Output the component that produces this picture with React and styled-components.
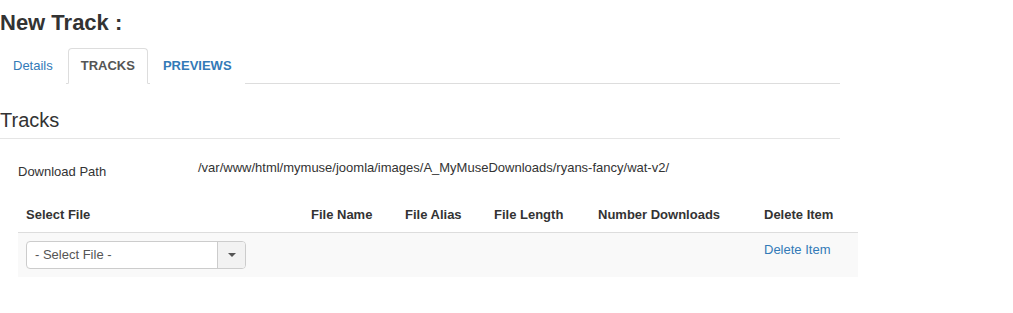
import React from 'react';
import styled, { createGlobalStyle } from 'styled-components';

const GlobalStyle = createGlobalStyle`
  body {
    margin: 0;
    background: #fff;
    font-family: "Liberation Sans", Arial, sans-serif;
    font-size: 13px;
    line-height: 18px;
    color: #333;
  }
`;

const Page = styled.div`
  width: 840px;
  padding-top: 10px;
`;

const Title = styled.h1`
  margin: 0 0 12px;
  font-size: 22px;
  line-height: 26px;
  font-weight: bold;
  color: #333;
`;

const TabBar = styled.ul`
  display: flex;
  margin: 0;
  padding: 0;
  list-style: none;
  border-bottom: 1px solid #ddd;
`;

const Tab = styled.li`
  margin: 0 2px -1px 0;
  padding: 8px 12px;
  border: 1px solid ${p => (p.active ? '#ddd' : 'transparent')};
  border-bottom-color: ${p => (p.active ? '#fff' : 'transparent')};
  border-radius: 4px 4px 0 0;
  background: #fff;
  color: ${p => (p.active ? '#555' : '#337ab7')};
  font-weight: ${p => (p.bold ? 'bold' : 'normal')};
  cursor: pointer;
`;

const SectionTitle = styled.h2`
  margin: 25px 0 0;
  padding-bottom: 7px;
  border-bottom: 1px solid #e5e5e5;
  font-size: 20px;
  line-height: 22px;
  font-weight: normal;
  color: #333;
`;

const FieldRow = styled.div`
  display: flex;
  align-items: flex-start;
  margin: 20px 0 0 18px;
`;

const FieldLabel = styled.div`
  width: 180px;
  margin-top: 4px;
`;

const FieldValue = styled.div`
  color: #333;
`;

const Table = styled.table`
  margin: 17px 0 0 18px;
  width: 840px;
  table-layout: fixed;
  border-collapse: collapse;
`;

const Th = styled.th`
  box-sizing: border-box;
  width: ${p => p.w}px;
  padding: 8px;
  text-align: left;
  font-weight: bold;
  border-bottom: 1px solid #ddd;
`;

const Row = styled.tr`
  background: #f9f9f9;
`;

const Td = styled.td`
  padding: 8px;
  vertical-align: top;
`;

const SelectBox = styled.div`
  display: flex;
  width: 220px;
  height: 28px;
  box-sizing: border-box;
  border: 1px solid #ccc;
  border-radius: 4px;
  background: #fff;
  overflow: hidden;
`;

const SelectText = styled.div`
  flex: 1;
  padding: 0 8px;
  line-height: 26px;
  font-size: 13px;
  color: #555;
`;

const SelectArrow = styled.div`
  width: 27px;
  display: flex;
  align-items: center;
  justify-content: center;
  border-left: 1px solid #ccc;
  background: #f2f2f2;
`;

const Caret = styled.span`
  width: 0;
  height: 0;
  border-left: 4px solid transparent;
  border-right: 4px solid transparent;
  border-top: 4px solid #555;
`;

const Link = styled.a`
  color: #337ab7;
  text-decoration: none;
`;

const columns = [
  { label: 'Select File', w: 285 },
  { label: 'File Name', w: 94 },
  { label: 'File Alias', w: 89 },
  { label: 'File Length', w: 104 },
  { label: 'Number Downloads', w: 166 },
  { label: 'Delete Item', w: 102 },
];

export default function App() {
  return (
    <Page>
      <GlobalStyle />
      <Title>New Track :</Title>
      <TabBar>
        <Tab>Details</Tab>
        <Tab active bold>TRACKS</Tab>
        <Tab bold>PREVIEWS</Tab>
      </TabBar>
      <SectionTitle>Tracks</SectionTitle>
      <FieldRow>
        <FieldLabel>Download Path</FieldLabel>
        <FieldValue>/var/www/html/mymuse/joomla/images/A_MyMuseDownloads/ryans-fancy/wat-v2/</FieldValue>
      </FieldRow>
      <Table>
        <thead>
          <tr>
            {columns.map(c => <Th key={c.label} w={c.w}>{c.label}</Th>)}
          </tr>
        </thead>
        <tbody>
          <Row>
            <Td>
              <SelectBox>
                <SelectText>- Select File -</SelectText>
                <SelectArrow><Caret /></SelectArrow>
              </SelectBox>
            </Td>
            <Td />
            <Td />
            <Td />
            <Td />
            <Td><Link href="#">Delete Item</Link></Td>
          </Row>
        </tbody>
      </Table>
    </Page>
  );
}
